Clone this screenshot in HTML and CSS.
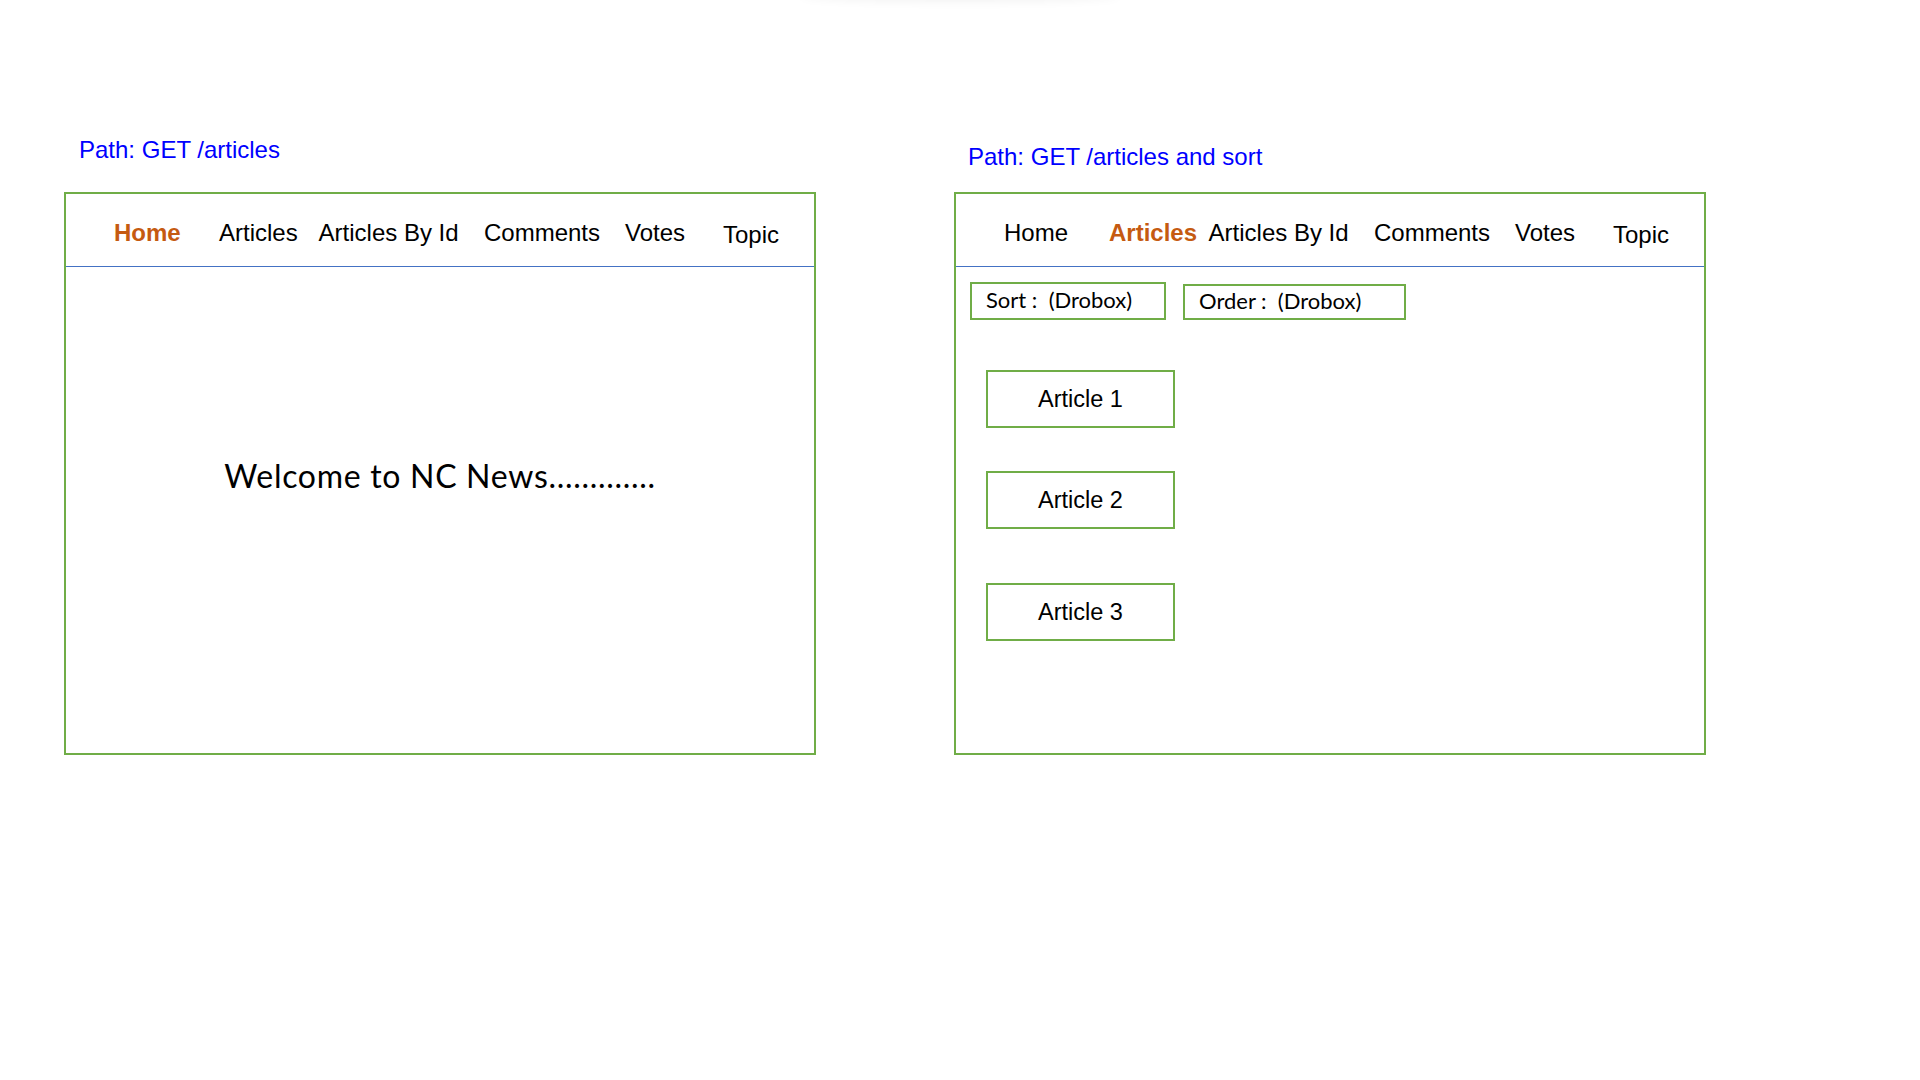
FILE: index.html
```html
<!DOCTYPE html>
<html lang="en">
<head>
<meta charset="utf-8">
<title>NC News wireframes</title>
<link rel="stylesheet" href="styles.css">
</head>
<body>
<div class="top-shadow"></div>
<main class="board">
  <section class="column column-left">
    <p class="path path-left">Path: GET /articles</p>
    <div class="frame">
      <nav class="nav">
        <span class="nav-item active">Home</span>
        <span class="nav-item">Articles</span>
        <span class="nav-item">Articles By Id</span>
        <span class="nav-item">Comments</span>
        <span class="nav-item">Votes</span>
        <span class="nav-item nav-low">Topic</span>
      </nav>
      <div class="home-body">
        <p class="welcome">Welcome to NC News.............</p>
      </div>
    </div>
  </section>
  <section class="column column-right">
    <p class="path path-right">Path: GET /articles and sort</p>
    <div class="frame">
      <nav class="nav">
        <span class="nav-item">Home</span>
        <span class="nav-item active">Articles</span>
        <span class="nav-item">Articles By Id</span>
        <span class="nav-item">Comments</span>
        <span class="nav-item">Votes</span>
        <span class="nav-item nav-low">Topic</span>
      </nav>
      <div class="articles-body">
        <div class="filters">
          <div class="select select-sort">Sort :&nbsp; (Drobox)</div>
          <div class="select select-order">Order :&nbsp; (Drobox)</div>
        </div>
        <div class="article-list">
          <div class="article">Article 1</div>
          <div class="article">Article 2</div>
          <div class="article">Article 3</div>
        </div>
      </div>
    </div>
  </section>
</main>
</body>
</html>
```
FILE: styles.css
```css
* { box-sizing: border-box; }
html, body {
  margin: 0;
  padding: 0;
  background: #ffffff;
}
body {
  width: 1920px;
  height: 1080px;
  position: relative;
  overflow: hidden;
  font-family: "Liberation Sans", Arial, sans-serif;
  color: #000;
}
.top-shadow {
  position: absolute;
  left: 800px;
  top: -12px;
  width: 320px;
  height: 12px;
  border-radius: 50%;
  box-shadow: 0 2px 10px rgba(0,0,0,0.05);
}
.board {
  display: flex;
  padding-left: 64px;
  gap: 138px;
}
.column {
  display: flex;
  flex-direction: column;
  width: 752px;
}
.path {
  margin: 0;
  font-size: 24px;
  line-height: 28px;
  height: 28px;
  color: #0000ff;
}
.path-left {
  margin-top: 136px;
  margin-bottom: 28px;
  padding-left: 15px;
}
.path-right {
  margin-top: 143px;
  margin-bottom: 21px;
  padding-left: 14px;
}
.frame {
  width: 752px;
  height: 563px;
  border: 2px solid #70ad47;
  display: flex;
  flex-direction: column;
}
.nav {
  display: grid;
  grid-template-columns: 105px 99.6px 165.4px 141px 98px auto;
  padding: 25px 0 17px 48px;
  border-bottom: 1px solid #4472c4;
  font-size: 24px;
  line-height: 28px;
  align-items: start;
}
.nav-item { white-space: nowrap; }
.nav-item.active {
  font-weight: bold;
  color: #c55a11;
}
.nav-low { margin-top: 2px; }
.home-body {
  flex: 1;
  padding-top: 189px;
}
.welcome {
  margin: 0;
  text-align: center;
  font-family: Lato, "Open Sans", sans-serif;
  font-size: 32px;
  line-height: 40px;
  letter-spacing: 0.7px;
}
.articles-body {
  flex: 1;
  padding: 15px 0 0 14px;
}
.filters {
  display: flex;
  align-items: flex-end;
  gap: 17px;
}
.select {
  border: 2px solid #70ad47;
  font-family: Lato, "Open Sans", sans-serif;
  font-size: 22px;
  white-space: nowrap;
}
.select-sort {
  width: 196px;
  height: 38px;
  padding: 2px 0 0 14px;
  line-height: 28px;
}
.select-order {
  width: 223px;
  height: 36px;
  padding: 1px 0 0 14px;
  line-height: 28px;
}
.article-list {
  display: flex;
  flex-direction: column;
  gap: 43px;
  margin-top: 50px;
  padding-left: 16px;
}
.article {
  width: 189px;
  height: 58px;
  border: 2px solid #70ad47;
  display: flex;
  align-items: center;
  justify-content: center;
  font-size: 23.5px;
}
.article:last-child { margin-top: 11px; }
```
